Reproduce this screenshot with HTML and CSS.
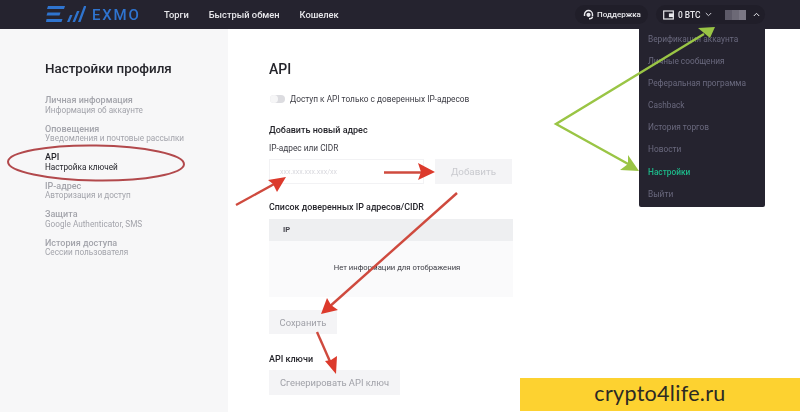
FILE: index.html
```html
<!DOCTYPE html>
<html lang="en">
<head>
    <meta charset="UTF-8">
    <meta name="viewport" content="width=device-width, initial-scale=1.0">
    <title>EXMO - Настройки профиля</title>
    <link rel="stylesheet" href="styles.css">
</head>
<body>
    <header class="topbar">
        <div class="logo">
            <svg class="logo-mark" width="40" height="17" viewBox="0 0 40 17">
                <path d="M2 0h17l-1 3H1zM1.500 6.500h13l-1 3H.5zM.5 13h16l-1 3H0z" fill="#2f74cf"/>
                <path d="M21 16l3-7h2.500l-3 7zM26.500 16l4.500-11h2.500L29 16zM32 16l6-16h2.500L34.500 16z" fill="#2f74cf"/>
            </svg>
            <span class="logo-text">EXMO</span>
        </div>
        <nav class="topnav">
            <a>Торги</a>
            <a>Быстрый обмен</a>
            <a>Кошелек</a>
        </nav>
        <div class="topright">
            <div class="pill support">
                <svg width="11" height="11" viewBox="0 0 11 11" fill="none" stroke="#e8e8ec" stroke-width="1.400">
                    <path d="M1.500 7V5.500a4 4 0 0 1 8 0V7"/>
                    <circle cx="5.500" cy="5.800" r="2.100" fill="#e8e8ec" stroke="none"/>
                    <path d="M9.500 7.500c0 1.500-1.500 2.300-3.500 2.300"/>
                </svg>
                <span>Поддержка</span>
            </div>
            <div class="pill account">
                <svg width="11" height="10" viewBox="0 0 11 10" fill="none" stroke="#e8e8ec" stroke-width="1.200">
                    <rect x="0.700" y="1" width="9.600" height="8"/>
                    <rect x="6.500" y="4" width="3.800" height="2.500" fill="#e8e8ec"/>
                </svg>
                <span class="balance">0 BTC</span>
                <svg class="chevron" width="7" height="5" viewBox="0 0 7 5" fill="none" stroke="#c9c9d2" stroke-width="1"><path d="M.8 1l2.700 2.700L6.200 1"/></svg>
                <div class="user-blur"><i></i><i></i><i></i></div>
                <svg class="chevron-up" width="7" height="5" viewBox="0 0 7 5" fill="none" stroke="#e8e8ec" stroke-width="1"><path d="M.8 4l2.700-2.700L6.200 4"/></svg>
            </div>
        </div>
    </header>

    <div class="page">
        <aside class="sidebar">
            <h2>Настройки профиля</h2>
            <ul class="side-menu">
                <li><b>Личная информация</b><span>Информация об аккаунте</span></li>
                <li><b>Оповещения</b><span>Уведомления и почтовые рассылки</span></li>
                <li class="active"><b>API</b><span>Настройка ключей</span></li>
                <li><b>IP-адрес</b><span>Авторизация и доступ</span></li>
                <li><b>Защита</b><span>Google Authenticator, SMS</span></li>
                <li><b>История доступа</b><span>Сессии пользователя</span></li>
            </ul>
        </aside>

        <main class="content">
            <h1>API</h1>
            <div class="toggle-row">
                <span class="toggle"><i></i></span>
                <span>Доступ к API только с доверенных IP-адресов</span>
            </div>
            <h3 class="add-title">Добавить новый адрес</h3>
            <div class="field-label">IP-адрес или CIDR</div>
            <div class="add-row">
                <div class="ip-input">ххх.ххх.ххх.ххх/хх</div>
                <button class="btn add-btn">Добавить</button>
            </div>
            <h3 class="list-title">Список доверенных IP адресов/CIDR</h3>
            <div class="ip-table">
                <div class="ip-head">IP</div>
                <div class="ip-empty">Нет информации для отображения</div>
            </div>
            <button class="btn save-btn">Сохранить</button>
            <h3 class="keys-title">API ключи</h3>
            <button class="btn gen-btn">Сгенерировать API ключ</button>
        </main>
    </div>

    <!-- Dropdown -->
    <ul class="user-menu">
        <li>Верификация аккаунта</li>
        <li>Личные сообщения</li>
        <li>Реферальная программа</li>
        <li>Cashback</li>
        <li>История торгов</li>
        <li>Новости</li>
        <li class="current">Настройки</li>
        <li>Выйти</li>
    </ul>

    <!-- Annotations drawn over the screenshot -->
    <svg class="marks" width="800" height="412" viewBox="0 0 800 412" fill="none">
        <ellipse cx="96" cy="163" rx="88" ry="17.500" stroke="#b2494c" stroke-width="2" transform="rotate(0.800 96 163)"/>
        <g stroke="#cf4a3e" stroke-width="2.400">
            <path d="M236 205L276 183"/>
            <path d="M384 172.500H422"/>
            <path d="M457 193L328 308"/>
            <path d="M317 332L332 366"/>
        </g>
        <g fill="#dc3a2c">
            <path d="M286 177L268 180L273 184L277 192Z"/>
            <path d="M435 172L418 163L421 172L418 180Z"/>
            <path d="M321 314L327 298L331 305L338 310Z"/>
            <path d="M336 374L325 361L331 360L337 356Z"/>
        </g>
        <path d="M704 34L556 124L630 165" stroke="#9ac545" stroke-width="2.400"/>
        <g fill="#9ac545">
            <path d="M715 27L698 28L704 33L710 38Z"/>
            <path d="M639 171L628 155L628 164L620 170Z"/>
        </g>
    </svg>

    <div class="banner">crypto4life.ru</div>
</body>
</html>
```

FILE: styles.css
```css
* {
    box-sizing: border-box;
}
body {
    margin: 0;
    height: 412px;
    overflow: hidden;
    position: relative;
    font-family: Roboto, 'Liberation Sans', sans-serif;
    background-color: #fff;
    color: #25252b;
    font-size: 8.3px;
}

/* the source picture is a soft, scaled-down capture */
.topbar, .page, .user-menu {
    filter: blur(0.35px);
}

/* Top bar */
.topbar {
    height: 29px;
    background-color: #25232f;
    display: flex;
    align-items: center;
    padding-left: 46px;
    padding-right: 35px;
    color: #e8e8ec;
}
.logo {
    display: flex;
    align-items: center;
    gap: 6px;
    width: 118px;
}
.logo-text {
    color: #2f74cf;
    font-size: 15px;
    font-weight: 500;
    letter-spacing: 1.8px;
}
.topnav {
    display: flex;
    gap: 20px;
    font-size: 9.3px;
    font-weight: 500;
}
.topright {
    margin-left: auto;
    display: flex;
    gap: 8px;
}
.pill {
    height: 19px;
    display: flex;
    align-items: center;
    background-color: #201e29;
    border-radius: 10px;
    font-weight: 500;
}
.support {
    width: 73px;
    padding-left: 8px;
    gap: 3px;
    font-size: 8px;
}
.account {
    width: 109px;
    padding-left: 7px;
    font-size: 8.4px;
}
.balance {
    margin-left: 4px;
}
.chevron {
    margin-left: 5px;
}
.user-blur {
    display: flex;
    margin-left: 13px;
    height: 10px;
}
.user-blur i {
    width: 7px;
    background-color: #5d5a68;
}
.user-blur i:nth-child(2) {
    background-color: #6c6976;
}
.user-blur i:nth-child(3) {
    background-color: #7a7784;
}
.chevron-up {
    margin-left: 7px;
}

/* Page */
.page {
    display: flex;
    height: 383px;
}
.sidebar {
    width: 228px;
    background-color: #f7f7f8;
    padding: 30px 0 0 45px;
}
.sidebar h2 {
    margin: 0;
    font-size: 13.4px;
    line-height: 20px;
    font-weight: 500;
}
.side-menu {
    list-style: none;
    margin: 17px 0 0;
    padding: 0;
    color: #a3a4ab;
}
.side-menu li {
    height: 28.5px;
    line-height: 9.5px;
}
.side-menu b {
    display: block;
    font-weight: 500;
    font-size: 9px;
}
.side-menu span {
    display: block;
    font-size: 8.2px;
}
.side-menu .active {
    color: #25252b;
}

.content {
    flex: 1;
    padding: 30px 0 0 41px;
}
.content h1 {
    margin: 0;
    font-size: 14px;
    line-height: 20px;
    font-weight: 500;
}
.content h3 {
    margin: 0;
    font-size: 9px;
    line-height: 12px;
    font-weight: 700;
}
.toggle-row {
    margin-top: 15px;
    height: 10px;
    line-height: 10px;
    display: flex;
    align-items: center;
    gap: 5px;
    color: #3c3c44;
}
.toggle {
    width: 15px;
    height: 8px;
    margin-left: 1px;
    border-radius: 4px;
    background-color: #dcdce0;
    display: flex;
}
.toggle i {
    width: 8px;
    height: 8px;
    border-radius: 50%;
    background-color: #f6f6f7;
}
.content .add-title {
    margin-top: 20px;
    font-weight: 500;
}
.field-label {
    margin-top: 6px;
    line-height: 12px;
    color: #3c3c44;
}
.add-row {
    margin-top: 5px;
    display: flex;
    gap: 11px;
}
.ip-input {
    width: 155px;
    height: 25px;
    padding-left: 10px;
    line-height: 24px;
    font-size: 7px;
    color: #d9d9de;
    border: 1px solid #f2f2f4;
}
.btn {
    display: block;
    border: 0;
    padding: 0;
    height: 25px;
    background-color: #f4f4f6;
    font-family: inherit;
    font-size: 9.4px;
    color: #a0a1a8;
}
.add-btn {
    width: 77px;
    font-size: 9.8px;
    color: #c9cacf;
}
.content .list-title {
    margin-top: 17px;
    font-size: 8.9px;
    font-weight: 500;
}
.ip-table {
    margin-top: 6px;
    width: 244px;
    height: 78px;
    background-color: #fafafb;
}
.ip-head {
    height: 22px;
    padding-left: 14px;
    line-height: 22px;
    background-color: #eeeff1;
    font-size: 7.6px;
    font-weight: 700;
    color: #44444c;
}
.ip-empty {
    padding-left: 12px;
    text-align: center;
    font-size: 7.7px;
    line-height: 54px;
    color: #3c3c44;
}
.save-btn {
    margin-top: 13px;
    width: 68px;
    height: 24px;
}
.content .keys-title {
    margin-top: 19px;
    font-weight: 500;
}
.gen-btn {
    margin-top: 5px;
    width: 131px;
}

/* Dropdown */
.user-menu {
    position: absolute;
    left: 639px;
    top: 28px;
    width: 126px;
    height: 179px;
    margin: 0;
    padding: 0 0 0 9px;
    list-style: none;
    background-color: #25232f;
    color: #6a697e;
    font-size: 8.3px;
    border-radius: 0 0 2px 2px;
}
.user-menu li {
    height: 22.1px;
    line-height: 22px;
}
.current {
    color: #1db98a;
    font-weight: 500;
}

/* Annotations */
.marks {
    position: absolute;
    left: 0;
    top: 0;
}
.banner {
    position: absolute;
    left: 520px;
    top: 378px;
    width: 280px;
    height: 33px;
    background-color: #fdd230;
    color: #2c2a24;
    text-align: center;
    font-family: Lato, sans-serif;
    font-size: 21.5px;
    line-height: 31px;
    letter-spacing: 0.3px;
}
```
